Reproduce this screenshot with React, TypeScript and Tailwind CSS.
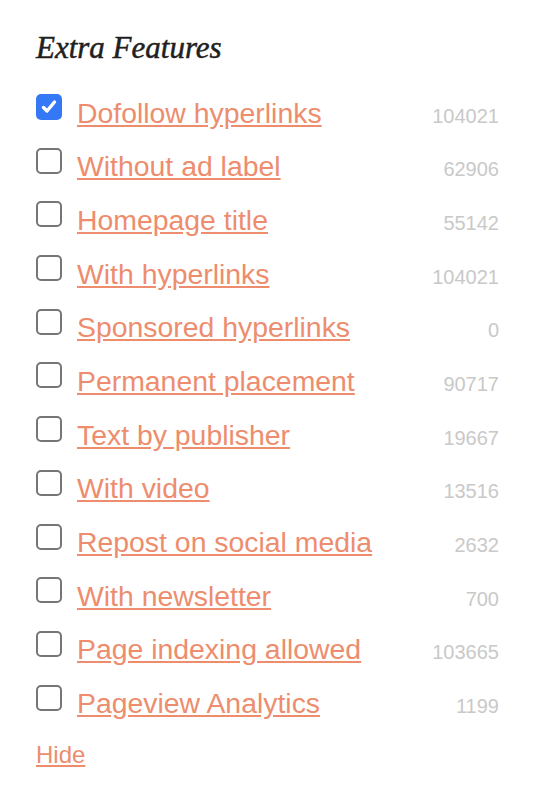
type Feature = {
  label: string;
  count: number;
  checked?: boolean;
};

const features: Feature[] = [
  { label: "Dofollow hyperlinks", count: 104021, checked: true },
  { label: "Without ad label", count: 62906 },
  { label: "Homepage title", count: 55142 },
  { label: "With hyperlinks", count: 104021 },
  { label: "Sponsored hyperlinks", count: 0 },
  { label: "Permanent placement", count: 90717 },
  { label: "Text by publisher", count: 19667 },
  { label: "With video", count: 13516 },
  { label: "Repost on social media", count: 2632 },
  { label: "With newsletter", count: 700 },
  { label: "Page indexing allowed", count: 103665 },
  { label: "Pageview Analytics", count: 1199 },
];

function Checkbox({ checked }: { checked?: boolean }) {
  if (checked) {
    return (
      <span className="flex h-[26px] w-[26px] shrink-0 items-center justify-center rounded-[5px] bg-[#3478f6]">
        <svg width="18" height="18" viewBox="0 0 18 18" fill="none">
          <path
            d="M3.5 9.5l3.5 3.5 7.5-9"
            stroke="white"
            strokeWidth="3.4"
            strokeLinecap="round"
            strokeLinejoin="round"
          />
        </svg>
      </span>
    );
  }
  return (
    <span className="h-[26px] w-[26px] shrink-0 rounded-[5px] border-2 border-[#767676] bg-white" />
  );
}

export default function App() {
  return (
    <div className="min-h-[794px] bg-white pl-[36px] pr-[41px] pt-[29.5px] font-['Liberation_Sans',Arial,sans-serif]">
      {/* Title */}
      <h2 className="font-['Liberation_Serif','Times_New_Roman',serif] text-[31px] italic leading-[36px] text-[#1f1f1f] [-webkit-text-stroke:0.5px_#1f1f1f]">
        Extra Features
      </h2>

      <div className="mt-[28.5px] flex flex-col">
        {features.map((f) => (
          <div key={f.label} className="flex h-[53.7px] items-start gap-[15px]">
            <Checkbox checked={f.checked} />
            <div className="mt-[2.6px] flex flex-1 items-baseline justify-between">
              <a
                href="#"
                className="text-[28.4px] leading-[32px] text-[#ed8d6e] underline"
              >
                {f.label}
              </a>
              <span className="text-[20px] leading-[32px] text-[#c9c9c9]">
                {f.count}
              </span>
            </div>
          </div>
        ))}
      </div>

      {/* Hide */}
      <a
        href="#"
        className="mt-[2.3px] block w-fit text-[24px] leading-[28px] text-[#ed8d6e] underline"
      >
        Hide
      </a>
    </div>
  );
}
